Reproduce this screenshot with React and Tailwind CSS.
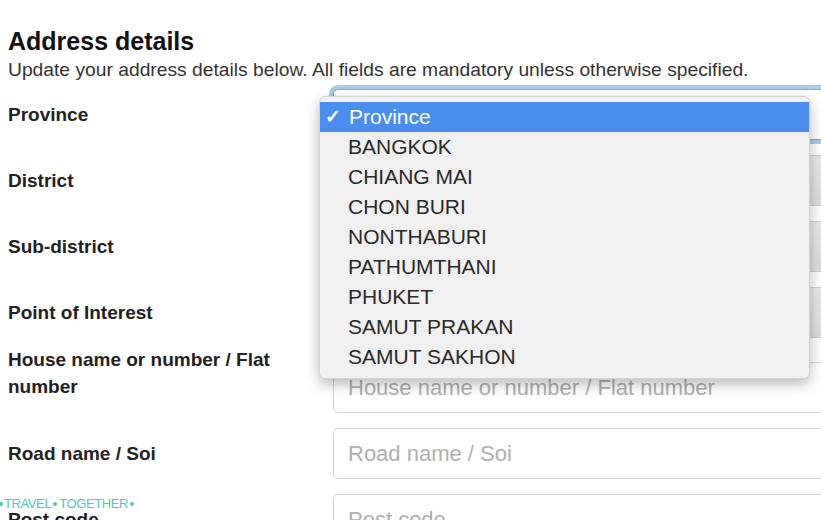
import React from 'react'

const options = ['BANGKOK', 'CHIANG MAI', 'CHON BURI', 'NONTHABURI', 'PATHUMTHANI', 'PHUKET', 'SAMUT PRAKAN', 'SAMUT SAKHON']

const selects = ['District', 'Sub-district', 'Point of Interest']

export default function App() {
  return (
    <div className="relative w-[821px] h-[520px] overflow-hidden bg-white font-['Liberation_Sans',Arial,sans-serif] text-[#222]">
      <div className="pl-2 pt-[26px]">
        <h2 className="text-[25px] leading-[30px] font-bold text-[#111]">Address details</h2>
        <p className="mt-[3px] text-[19.25px] leading-[22px] text-[#333] whitespace-nowrap">
          Update your address details below. All fields are mandatory unless otherwise specified.
        </p>

        <div className="mt-[8px] flex flex-col">
          {/* province: focused select */}
          <div className="flex items-center h-[51px]">
            <div className="w-[325px] shrink-0 text-[19px] leading-[27px] font-bold">Province</div>
            <div className="w-[500px] shrink-0 h-[51px] bg-white border border-[#7aaedb] rounded-[5px] shadow-[0_0_0_4px_#a8cdec]" />
          </div>

          {selects.map(label => (
            <div key={label} className="flex items-center h-[51px] mt-[15px]">
              <div className="w-[325px] shrink-0 text-[19px] leading-[27px] font-bold">{label}</div>
              <div className="w-[500px] shrink-0 h-[51px] bg-gradient-to-b from-[#e9e9e9] to-[#dcdcdc] border border-[#cfcfcf] rounded-[5px]" />
            </div>
          ))}

          <div className="flex items-start mt-[8px]">
            <div className="w-[325px] shrink-0 pr-[40px] text-[19px] leading-[27px] font-bold">House name or number / Flat number</div>
            <div className="mt-[16px] w-[500px] shrink-0 h-[51px] bg-white border border-[#d2d2d2] rounded-[5px] pl-[14px] flex items-center text-[22px] text-[#b0b0b0]">
              House name or number / Flat number
            </div>
          </div>

          <div className="flex items-center h-[51px] mt-[15px]">
            <div className="w-[325px] shrink-0 text-[19px] leading-[27px] font-bold">Road name / Soi</div>
            <div className="w-[500px] shrink-0 h-[51px] bg-white border border-[#d2d2d2] rounded-[5px] pl-[14px] flex items-center text-[22px] text-[#b0b0b0]">
              Road name / Soi
            </div>
          </div>

          <div className="flex items-center h-[51px] mt-[15px]">
            <div className="w-[325px] shrink-0 text-[19px] leading-[27px] font-bold">Post code</div>
            <div className="w-[500px] shrink-0 h-[51px] bg-white border border-[#d2d2d2] rounded-[5px] pl-[14px] flex items-center text-[22px] text-[#b0b0b0]">
              Post code
            </div>
          </div>
        </div>
      </div>

      {/* open dropdown menu */}
      <div className="absolute left-[319px] top-[96px] w-[491px] h-[283px] bg-[#f0f0f0] border border-[#d4d4d4] rounded-[6px] shadow-[0_5px_14px_rgba(0,0,0,0.28)] pt-[5px]">
        <div className="flex items-center h-[30px] bg-[#4a8ef0] text-white text-[21px]">
          <span className="w-[29px] pl-[5px] text-[19px] font-bold">✓</span>
          <span>Province</span>
        </div>
        {options.map(o => (
          <div key={o} className="h-[30px] leading-[30px] pl-[28px] text-[21px] text-[#2a2a2a]">{o}</div>
        ))}
      </div>

      {/* watermark */}
      <div className="absolute left-0 top-[497px] flex items-center text-[13px] leading-[14px] tracking-[-0.4px] text-[#4cc8bf]">
        <span className="w-[3px] h-[4px] rounded-r-full bg-[#4cc8bf] mr-[1px]" />
        <span>TRAVEL</span>
        <span className="w-[4px] h-[4px] rounded-full bg-[#4cc8bf] mx-[2px]" />
        <span>TOGETHER</span>
        <span className="w-[4px] h-[4px] rounded-full bg-[#4cc8bf] ml-[2px]" />
      </div>
    </div>
  )
}
